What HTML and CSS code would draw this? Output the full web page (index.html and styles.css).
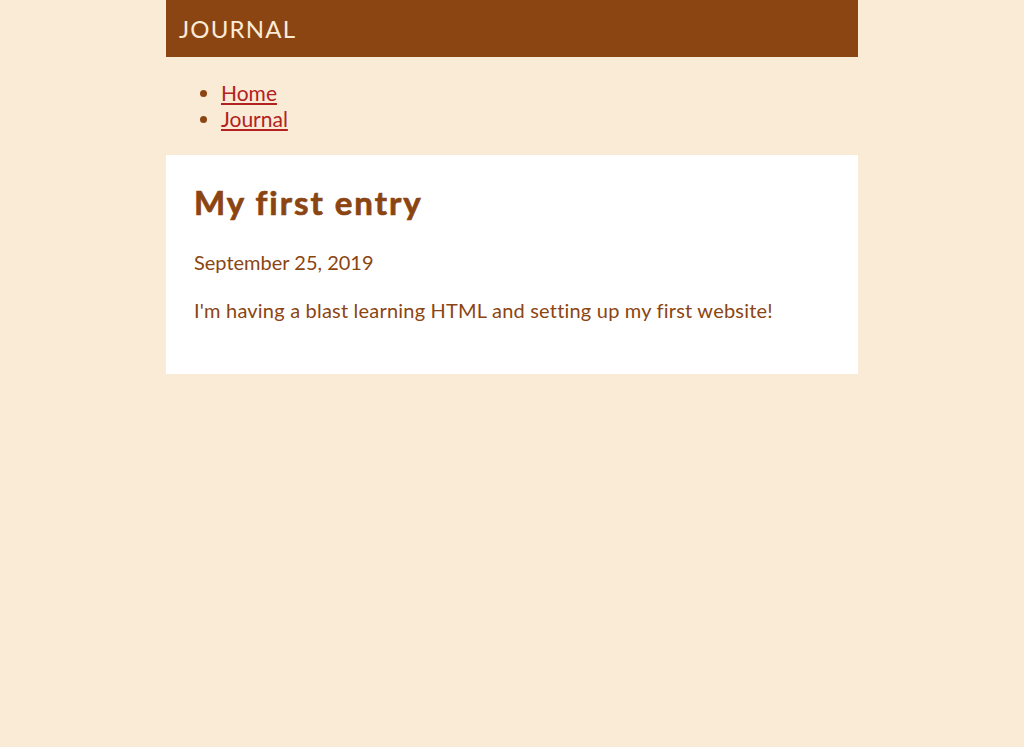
FILE: index.html
```html
<!DOCTYPE html>
<html lang="en">
<head>
<meta charset="utf-8">
<title>Journal</title>
<link rel="stylesheet" href="styles.css">
</head>
<body>
<div class="page">
  <header class="site-header">
    <h1 class="site-title">JOURNAL</h1>
  </header>
  <nav class="site-nav">
    <ul class="nav-list">
      <li><a href="#">Home</a></li>
      <li><a href="#">Journal</a></li>
    </ul>
  </nav>
  <article class="entry">
    <h2 class="entry-title">My first entry</h2>
    <p class="entry-date">September 25, 2019</p>
    <p class="entry-body">I'm having a blast learning HTML and setting up my first website!</p>
  </article>
</div>
</body>
</html>
```
FILE: styles.css
```css
html, body {
  margin: 0;
  padding: 0;
}
body {
  background: #faebd7;
  color: #8b4513;
  font-family: "Lato", "Open Sans", sans-serif;
}
.page {
  width: 692px;
  margin: 0 auto;
}
.site-header {
  background: #8b4513;
  height: 57px;
  display: flex;
  align-items: center;
  padding: 0 13px;
}
.site-title {
  margin: 0;
  color: #faebd7;
  font-weight: 400;
  font-size: 24px;
  letter-spacing: 1.2px;
}
.site-nav {
  padding: 23px 0 23px;
}
.nav-list {
  margin: 0;
  padding-left: 55px;
  font-size: 21px;
  line-height: 26px;
}
.nav-list a {
  color: #b22222;
}
.entry {
  background: #fff;
  padding: 23px 28px 31px;
}
.entry-title {
  margin: 0;
  font-size: 33px;
  font-weight: 700;
  letter-spacing: 2px;
  line-height: 48px;
  -webkit-text-stroke: 0.7px #8b4513;
}
.entry-date,
.entry-body {
  margin: 0;
  font-size: 20px;
  line-height: 26px;
}
.entry-date {
  margin-top: 23px;
}
.entry-body {
  margin-top: 22px;
  margin-bottom: 20px;
  letter-spacing: 0.2px;
}
```
